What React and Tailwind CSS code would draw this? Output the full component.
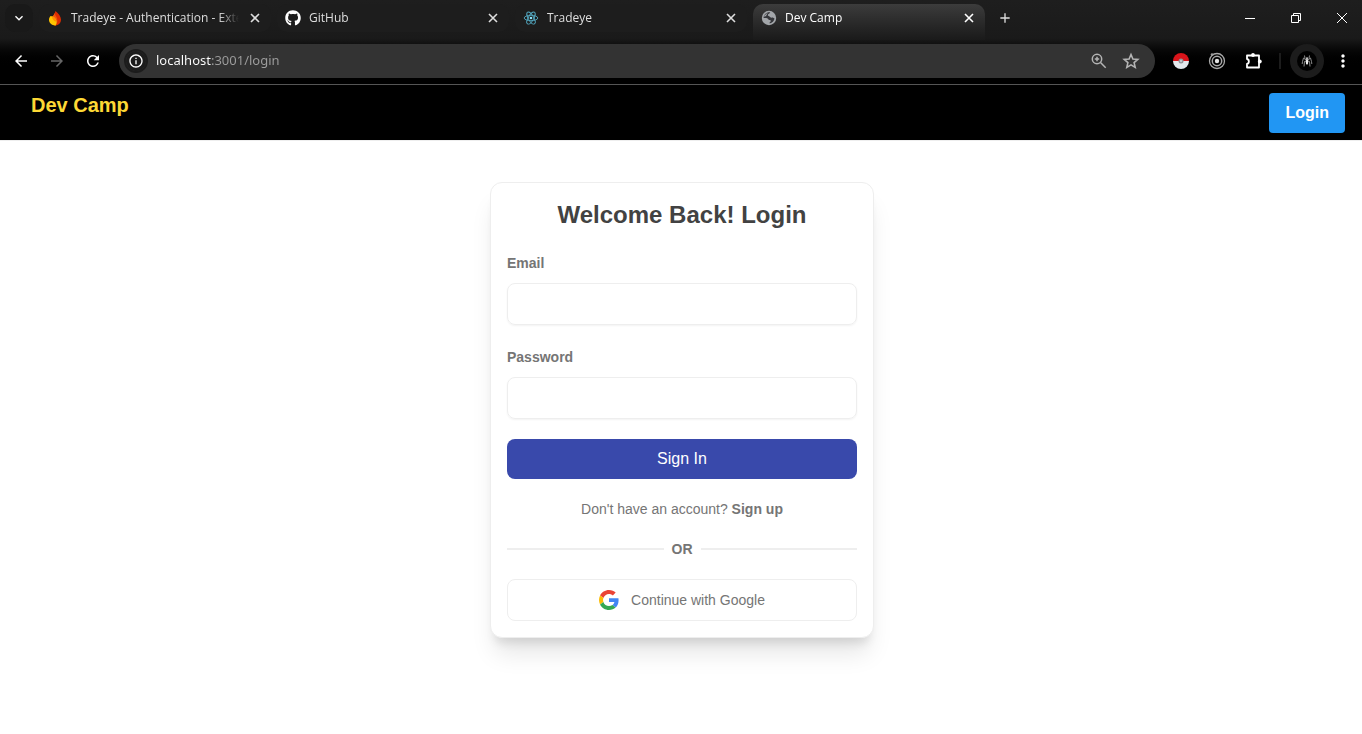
import React from "react";
import {
  MdArrowBack,
  MdArrowForward,
  MdRefresh,
  MdOutlineInfo,
  MdMoreVert,
  MdAdd,
  MdKeyboardArrowDown,
} from "react-icons/md";
import { FaGithub } from "react-icons/fa";

const Firebase = () => (
  <svg viewBox="0 0 16 16" className="size-4 shrink-0" aria-hidden="true">
    <path d="M8.500 1C11.500 3.500 14 6.500 14 9.800A5.600 5.600 0 0 1 8.500 15.400C6.500 15.400 5.500 13 5.300 9.500 5.300 6 7.700 4.500 8.500 1z" fill="#dd2c00" />
    <path d="M5.500 6.500C6.500 5.500 7.300 4.300 7.900 3c-.1 2.300 1.600 3.200 2.200 5.400.8 3-.1 5.500-1.600 7C5 15.400 4 11 5.500 6.500z" fill="#f0580c" />
    <path d="M2 9.800C2 8.300 2.600 7 3.600 6.100c3 .3 5.600 2.600 5.900 5.700.1 1.300-.3 2.600-1 3.600C4.800 15.500 2 13 2 9.800z" fill="#ffc400" />
    <path d="M5 6.600C7.800 7.500 9.400 9.500 9.500 11.800 7 11.500 5 9.600 5 6.600z" fill="#ff9100" />
  </svg>
);

const ReactLogo = () => (
  <svg viewBox="0 0 16 16" className="size-4 shrink-0" fill="none" stroke="#53a9c2" strokeWidth="0.9" aria-hidden="true">
    <ellipse cx="8" cy="8" rx="6.800" ry="2.700" />
    <ellipse cx="8" cy="8" rx="6.800" ry="2.700" transform="rotate(60 8 8)" />
    <ellipse cx="8" cy="8" rx="6.800" ry="2.700" transform="rotate(120 8 8)" />
    <circle cx="8" cy="8" r="1.300" fill="#8be4fb" stroke="none" />
  </svg>
);

const Globe = () => (
  <svg viewBox="0 0 16 16" className="size-4 shrink-0" aria-hidden="true">
    <circle cx="8" cy="8" r="7.200" fill="#a3a6aa" />
    <path d="M9.200 2.400C8.800 3.800 6.800 3.300 6.800 5c0 1.400 1.800.9 2.300 1.900.5.900 1.400.8 2.500.7 1 0 1.300.9 1.900 1 -.4 2.400-2.200 4.500-4.700 4.900-.4-.7-.1-1.300.6-1.700.8-.5.5-1.700-.5-1.800-1-.1-1.300-.1-1.700-.8C6.600 8.200 5.500 8 4.600 8H2.500C2.600 5.500 4.500 3 6.600 2.500 7.500 2.300 8.400 2.200 9.200 2.400z" fill="#36373b" />
    <path d="M2.700 6.200 6.800 2.600 5.300 5.600C4.600 6.700 3.500 6.800 2.700 6.200z" fill="#a3a6aa" />
  </svg>
);

const Cross = () => (
  <svg viewBox="0 0 10 10" className="size-[10px]" stroke="currentColor" strokeWidth="1.600" aria-hidden="true">
    <path d="M1 1l8 8M9 1L1 9" />
  </svg>
);

const ZoomIcon = () => (
  <svg viewBox="0 0 18 18" className="size-[18px]" fill="none" stroke="currentColor" strokeWidth="1.500" aria-hidden="true">
    <circle cx="7" cy="7" r="4.700" />
    <path d="M10.500 10.500l5.200 5.200M4.800 7h4.400M7 4.800v4.400" />
  </svg>
);

const Star = () => (
  <svg viewBox="0 0 18 18" className="size-[18px]" fill="none" stroke="currentColor" strokeWidth="1.600" aria-hidden="true">
    <path d="M9 2.500l1.900 4.500 4.900.4-3.700 3.200 1.100 4.800L9 12.900l-4.200 2.500 1.100-4.800L2.200 7.400 7.100 7z" />
  </svg>
);

const Pokeball = () => (
  <svg viewBox="0 0 16 16" className="size-4" aria-hidden="true">
    <path d="M0 8a8 8 0 0 1 16 0z" fill="#d9141a" />
    <path d="M0 8a8 8 0 0 0 16 0z" fill="#e3e8ec" />
    <circle cx="8" cy="8" r="2.500" fill="#8f9499" />
    <circle cx="8" cy="8" r="1.200" fill="#c3c7ca" />
  </svg>
);

const Rings = () => (
  <svg viewBox="0 0 18 18" className="size-[18px]" fill="none" stroke="#a9a9a9" aria-hidden="true">
    <circle cx="9" cy="9" r="7.500" strokeWidth="1.300" />
    <circle cx="9" cy="9" r="4.700" strokeWidth="1.500" />
    <circle cx="9" cy="9" r="2.200" fill="#e4e4e4" stroke="none" />
    <circle cx="4" cy="2.600" r="1.300" fill="#9a9a9a" stroke="none" />
  </svg>
);

const Puzzle = () => (
  <svg viewBox="0 0 18 18" className="size-[18px]" aria-hidden="true">
    <path
      d="M2 3.500H14V15.500H2V12C4.500 11.500 4.500 7.500 2 7Z"
      fill="none"
      stroke="#fff"
      strokeWidth="1.800"
      strokeLinejoin="round"
    />
    <circle cx="8" cy="3" r="1.900" fill="#fff" />
    <circle cx="14.800" cy="9.500" r="1.900" fill="#fff" />
  </svg>
);

const Spider = () => (
  <svg viewBox="0 0 20 20" className="size-5" aria-hidden="true">
    <circle cx="10" cy="10" r="10" fill="#000" />
    <g fill="none" stroke="#999" strokeWidth="0.9">
      <path d="M9.500 9 8 7.500 7.500 4.500M10.500 9l1.500-1.500.5-3" />
      <path d="M9.500 9.500 6.500 7 5.500 10.500 5.200 13M10.500 9.500l3-2.500 1 3.500.3 2.500" />
      <path d="M9.500 10 7.500 10.500 7 15.500M10.500 10l2 .5.500 5" />
    </g>
    <ellipse cx="10" cy="7.500" rx="0.900" ry="1.500" fill="#ccc" />
    <ellipse cx="10" cy="11" rx="1.200" ry="2.800" fill="#eee" />
  </svg>
);

const Google = () => (
  <svg viewBox="0 0 48 48" className="size-5" aria-hidden="true">
    <path fill="#EA4335" d="M24 9.500c3.540 0 6.710 1.220 9.210 3.600l6.850-6.850C35.900 2.380 30.470 0 24 0 14.620 0 6.510 5.380 2.560 13.220l7.980 6.190C12.430 13.720 17.740 9.500 24 9.500z" />
    <path fill="#4285F4" d="M46.980 24.550c0-1.570-.15-3.090-.38-4.550H24v9.020h12.940c-.58 2.960-2.260 5.480-4.780 7.180l7.730 6c4.510-4.180 7.090-10.360 7.090-17.650z" />
    <path fill="#FBBC05" d="M10.530 28.590c-.48-1.450-.76-2.990-.76-4.590s.27-3.140.76-4.590l-7.980-6.190C.92 16.460 0 20.120 0 24c0 3.880.92 7.540 2.560 10.780l7.970-6.190z" />
    <path fill="#34A853" d="M24 48c6.480 0 11.930-2.130 15.890-5.810l-7.730-6c-2.150 1.450-4.920 2.300-8.160 2.300-6.260 0-11.570-4.220-13.470-9.910l-7.980 6.190C6.510 42.620 14.620 48 24 48z" />
  </svg>
);

const TABS = [
  { title: "Tradeye - Authentication - Exte", icon: <Firebase /> },
  { title: "GitHub", icon: <FaGithub className="size-4 shrink-0 text-white" /> },
  { title: "Tradeye", icon: <ReactLogo /> },
  { title: "Dev Camp", icon: <Globe />, active: true },
];

function Tab({ title, icon, active }) {
  return (
    <div
      className={
        active
          ? "flex h-9 w-[232px] items-start rounded-t-[10px] bg-linear-to-b from-[#3c3c3c] to-[#1a1a1a] px-2 text-white"
          : "flex h-7 w-[232px] items-start rounded-[10px] bg-[#1d1d1d] px-2 text-[#dedede]"
      }
    >
      <div className="flex h-7 min-w-0 flex-1 items-center gap-2">
        {icon}
        <span className="min-w-0 flex-1 whitespace-nowrap mask-r-from-88% font-['Open_Sans','Noto_Sans',sans-serif] text-xs">
          {title}
        </span>
        <button type="button" aria-label={"Close " + title} className="flex size-4 items-center justify-center">
          <Cross />
        </button>
      </div>
    </div>
  );
}

function WindowButtons() {
  return (
    <div className="ml-auto mr-0.5 flex gap-[10px] text-white">
      <button type="button" aria-label="Minimize" className="flex size-9 items-center justify-center">
        <svg viewBox="0 0 10 10" className="size-[10px]" stroke="currentColor"><path d="M0 5.500h10" /></svg>
      </button>
      <button type="button" aria-label="Restore" className="flex size-9 items-center justify-center">
        <svg viewBox="0 0 10 10" className="size-[10px]" fill="none" stroke="currentColor">
          <path d="M.5 2.500h7v7h-7zM2.500 2.500v-2h7v7h-2" />
        </svg>
      </button>
      <button type="button" aria-label="Close window" className="flex size-9 items-center justify-center">
        <svg viewBox="0 0 10 10" className="size-[10px]" stroke="currentColor"><path d="M0 0l10 10M10 0L0 10" /></svg>
      </button>
    </div>
  );
}

function BrowserBar() {
  return (
    <header className="bg-linear-to-b from-[#1e1e1e] from-0% via-[#1a1a1a] via-45% to-black to-80% font-['Noto_Sans','Open_Sans',sans-serif]">
      <div className="flex h-10 items-start">
        <div className="flex items-start pl-[5px] pt-1">
          <button type="button" aria-label="Search tabs" className="mr-1.5 flex size-7 items-center justify-center rounded-[10px] bg-[#191919] text-white">
            <MdKeyboardArrowDown className="size-4" />
          </button>
          <div className="flex gap-1.5">
            {TABS.map((t) => (
              <Tab key={t.title} {...t} />
            ))}
          </div>
          <button type="button" aria-label="New tab" className="ml-1.5 flex size-7 items-center justify-center text-[#dedede]">
            <MdAdd className="size-4" />
          </button>
        </div>
        <WindowButtons />
      </div>
      <div className="flex h-[45px] items-center border-b border-[#555] pb-0.5 pl-3 text-white">
        <button type="button" aria-label="Back" className="mr-[18px]"><MdArrowBack className="size-[18px]" /></button>
        <button type="button" aria-label="Forward" className="mr-[18px] text-[#666]"><MdArrowForward className="size-[18px]" /></button>
        <button type="button" aria-label="Reload" className="mr-[17px]"><MdRefresh className="size-[18px]" /></button>
        <div className="flex h-[34px] flex-1 items-center rounded-full bg-[#333] pl-[7px] pr-[15px]">
          <button type="button" aria-label="Site information" className="flex size-5 items-center justify-center rounded-full bg-[#1c1c1c] outline-2 outline-[#1c1c1c]">
            <MdOutlineInfo className="size-4" />
          </button>
          <input
            type="text"
            aria-label="Address"
            defaultValue="localhost:3001/login"
            className="ml-[10px] min-w-0 flex-1 bg-linear-to-r from-white from-[56px] to-[#9e9e9e] to-[56px] bg-clip-text text-[13px] text-transparent outline-none"
          />
          <button type="button" aria-label="Zoom" className="mr-[14px] text-[#b4b4b4]"><ZoomIcon /></button>
          <button type="button" aria-label="Bookmark" className="text-[#b4b4b4]"><Star /></button>
        </div>
        <div className="flex items-center pl-[18px]">
          <button type="button" aria-label="Extension" className="mr-[19px]"><Pokeball /></button>
          <button type="button" aria-label="Screen recorder" className="mr-[19px]"><Rings /></button>
          <button type="button" aria-label="Extensions" className="mr-4"><Puzzle /></button>
          <span className="mr-[9px] h-4 w-0.5 bg-[#1c1c1c]" />
          <button type="button" aria-label="Profile" className="mr-[9px] flex size-[34px] items-center justify-center rounded-full bg-[#1c1c1c]"><Spider /></button>
          <button type="button" aria-label="Menu" className="mr-[9px]"><MdMoreVert className="size-5" /></button>
        </div>
      </div>
    </header>
  );
}

function Field({ id, label, type }) {
  return (
    <div className="flex flex-col gap-2">
      <label htmlFor={id} className="text-sm/6 font-bold text-[#757575]">{label}</label>
      <input
        id={id}
        type={type}
        className="h-[42px] w-full rounded-lg border border-[#eee] px-3 text-base shadow-xs outline-none"
      />
    </div>
  );
}

function LoginCard() {
  return (
    <form className="flex w-96 flex-col gap-5 rounded-xl border border-[#eee] bg-white p-4 text-[#757575] shadow-[0_20px_25px_-5px_rgba(0,0,0,0.1),0_10px_10px_-5px_rgba(0,0,0,0.1)]">
      <h1 className="text-center text-2xl font-bold text-[#424242]">Welcome Back! Login</h1>
      <Field id="email" label="Email" type="email" />
      <Field id="password" label="Password" type="password" />
      <button type="button" className="h-10 rounded-lg bg-[#3949ab] text-base text-white">Sign In</button>
      <p className="text-center text-sm">
        Don't have an account? <a href="#signup" className="font-bold">Sign up</a>
      </p>
      <div className="flex items-center gap-2 text-sm font-bold">
        <span className="h-0.5 flex-1 bg-[#eee]" />
        OR
        <span className="h-0.5 flex-1 bg-[#eee]" />
      </div>
      <button type="button" className="flex h-[42px] items-center justify-center gap-3 rounded-lg border border-[#eee] text-sm">
        <Google />
        Continue with Google
      </button>
    </form>
  );
}

export default function App() {
  return (
    <div className="min-h-screen bg-white font-['Liberation_Sans',Arial,sans-serif]">
      <BrowserBar />
      <nav className="flex items-start justify-between border-b border-[#eee] bg-black pb-[7px] pl-[31px] pr-[17px] pt-2">
        <a href="#home" className="text-xl/6 font-bold text-[#fdd835]">Dev Camp</a>
        <button type="button" className="h-10 rounded bg-[#2196f3] px-4 text-base font-bold text-white">Login</button>
      </nav>
      <main className="flex justify-center pb-10 pl-0.5 pt-[41px]">
        <LoginCard />
      </main>
    </div>
  );
}
